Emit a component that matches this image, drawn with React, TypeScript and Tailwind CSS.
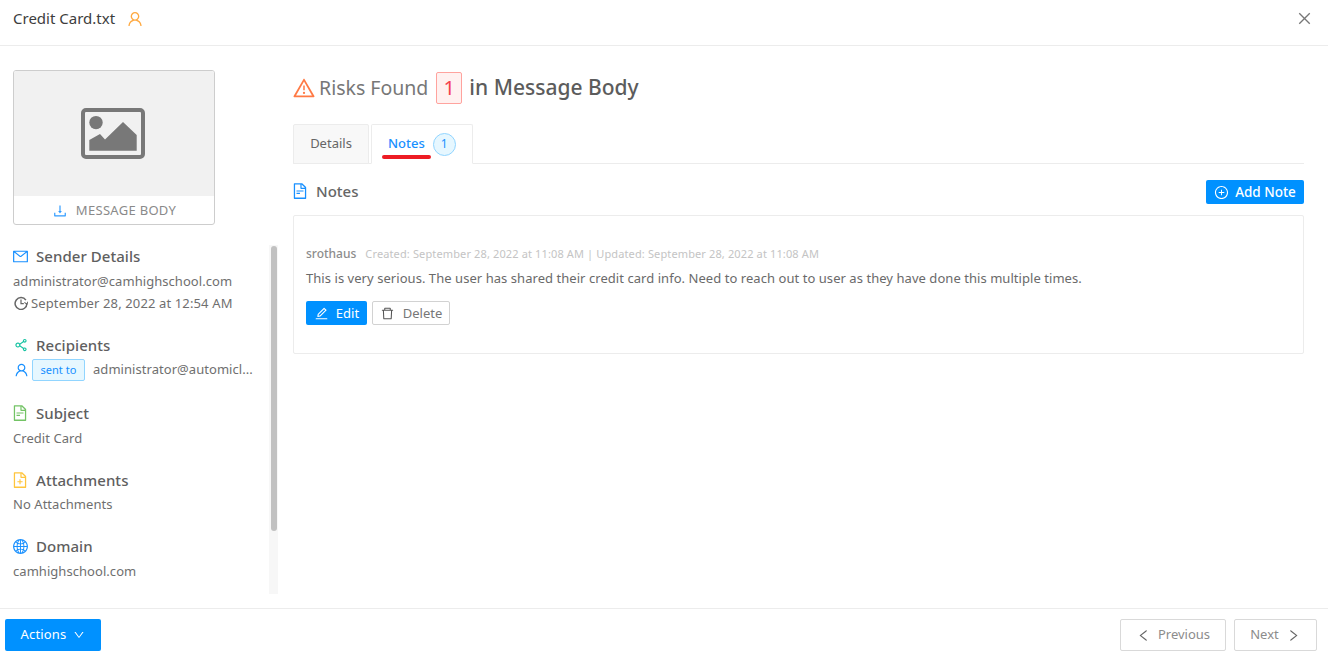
import React from "react";
import {
  AiOutlineUser, AiOutlineClose, AiOutlineDownload, AiOutlineMail, AiOutlineShareAlt,
  AiOutlineFileText, AiOutlineFileAdd, AiOutlineGlobal, AiOutlineWarning, AiOutlinePlusCircle, AiOutlineEdit,
  AiOutlineDelete, AiOutlineDown, AiOutlineLeft, AiOutlineRight,
} from "react-icons/ai";

function Section({ icon, title, children, className }: { icon: React.ReactNode; title: string; children: React.ReactNode; className: string }) {
  return (
    <div className={className}>
      <div className="flex items-center h-[20px]">
        <span className="w-[23px] flex items-center">{icon}</span>
        <span className="text-[15px] font-medium text-[#5f5f5f]">{title}</span>
      </div>
      {children}
    </div>
  );
}

export default function App() {
  return (
    <div className="w-[1328px] h-[655px] bg-white flex flex-col overflow-hidden text-[#666] font-['Noto_Sans','Open_Sans',sans-serif]">
      <header className="h-[46px] shrink-0 border-b border-[#ececec] flex items-center justify-between pl-[13px] pr-[15px] pb-[8px]">
        <div className="flex items-center gap-[11px]">
          <span className="text-[15px] text-[#3d3d3d]">Credit Card.txt</span>
          <AiOutlineUser className="text-[18px] text-[#ffa940]" />
        </div>
        <AiOutlineClose className="text-[17px] text-[#777]" />
      </header>

      <main className="flex-1 min-h-0 flex">
        <aside className="w-[293px] shrink-0 pl-[13px] pr-[15px] pt-[24px] flex flex-col">
          <div className="w-[202px] h-[155px] shrink-0 border border-[#cdcdcd] rounded-[3px] overflow-hidden flex flex-col">
            <div className="flex-1 bg-[#f1f1f1] flex items-center justify-center">
              <svg width="64" height="51" viewBox="0 0 64 51" className="text-[#787878] -ml-[2px]">
                <rect x="2" y="2" width="60" height="47" rx="3" fill="none" stroke="currentColor" strokeWidth="4" />
                <circle cx="15" cy="14.6" r="6.7" fill="currentColor" />
                <path d="M8.3 42.7V32L19 26L24 31.5L42 14L55.7 27V42.7Z" fill="currentColor" />
              </svg>
            </div>
            <div className="h-[28px] pt-[1px] flex items-center justify-center gap-[8px] text-[13px] tracking-[0.3px] text-[#8a8a8a]">
              <AiOutlineDownload className="text-[16px] text-[#2f9bff]" />
              <span>MESSAGE BODY</span>
            </div>
          </div>

          <div className="mt-[20px] flex-1 min-h-0 flex mb-[14px]">
            <div className="flex-1 min-w-0 overflow-hidden text-[13px] tracking-[0.05px] text-[#6f6f6f]">
              <Section className="pt-[1px]" icon={<AiOutlineMail className="text-[17px] text-[#1890ff] -ml-[1px]" />} title="Sender Details">
                <div className="mt-[4px] h-[22px] leading-[22px]">administrator@camhighschool.com</div>
                <div className="h-[22px] leading-[22px] flex items-center gap-[3px]">
                  <svg width="14" height="14" viewBox="0 0 14 14" fill="none" stroke="#666" strokeWidth="1.5" className="ml-[1px]">
                    <path d="M11.9 4.2A5.9 5.9 0 1 0 12.9 7.4" />
                    <path d="M10.4 6.4L12.9 8.2L14 5.8" strokeWidth="1.1" />
                    <path d="M7 3.6V7.6H9.8" strokeWidth="1.2" />
                  </svg>
                  <span className="tracking-[0.13px]">September 28, 2022 at 12:54 AM</span>
                </div>
              </Section>
              <Section className="mt-[21px]" icon={<AiOutlineShareAlt className="text-[16px] text-[#13c2a0]" />} title="Recipients">
                <div className="mt-[4px] flex items-center">
                  <AiOutlineUser className="text-[16px] text-[#1890ff] w-[19px] -ml-[1px]" />
                  <span className="ml-[1px] h-[22px] w-[53px] text-center border border-[#91d5ff] bg-[#e6f7ff] rounded-[2px] text-[11px] leading-[20px] text-[#1890ff]">sent to</span>
                  <span className="ml-[8px] whitespace-nowrap">administrator@automicl...</span>
                </div>
              </Section>
              <Section className="mt-[22px]" icon={<AiOutlineFileText className="text-[18px] text-[#73c365] -ml-[2px]" />} title="Subject">
                <div className="mt-[4px] h-[22px] leading-[22px]">Credit Card</div>
              </Section>
              <Section className="mt-[21px]" icon={<AiOutlineFileAdd className="text-[18px] text-[#ffc53d] -ml-[2px]" />} title="Attachments">
                <div className="mt-[3px] h-[22px] leading-[22px]">No Attachments</div>
              </Section>
              <Section className="mt-[21px]" icon={<AiOutlineGlobal className="text-[17px] text-[#1890ff] -ml-[1px]" />} title="Domain">
                <div className="mt-[4px] h-[22px] leading-[22px]">camhighschool.com</div>
              </Section>
            </div>
            <div className="w-[9px] shrink-0 bg-[#f7f7f7] flex justify-center">
              <div className="w-[6px] h-[285px] mt-[1px] rounded-full bg-[#c1c1c1]" />
            </div>
          </div>
        </aside>

        <section className="flex-1 min-w-0 pr-[24px] pt-[24px]">
          <div className="h-[36px] flex items-center">
            <AiOutlineWarning className="text-[24px] text-[#ff7a45] -ml-[1px]" />
            <span className="ml-[3px] text-[19.5px] text-[#777]">Risks Found</span>
            <span className="ml-[8px] w-[26px] h-[32px] flex items-center justify-center border border-[#ffa39e] bg-[#fff1f0] rounded-[2px] text-[20px] text-[#f5414d]">1</span>
            <span className="ml-[7px] text-[21px] font-medium text-[#5c5c5c]">in Message Body</span>
          </div>

          <div className="mt-[18px] h-[40px] flex items-end gap-[2px] border-b border-[#ececec]">
            <div className="w-[76px] h-[40px] -mb-[1px] border border-[#ececec] bg-[#f8f8f8] rounded-t-[2px] flex items-center justify-center text-[13px] text-[#666]">Details</div>
            <div className="relative w-[102px] h-[40px] -mb-[1px] border border-[#ececec] border-b-white bg-white rounded-t-[2px] flex items-center pl-[16px] gap-[8px]">
              <span className="text-[13px] font-medium text-[#1890ff]">Notes</span>
              <span className="w-[23px] h-[23px] rounded-full border border-[#91d5ff] bg-[#e6f7ff] flex items-center justify-center text-[12px] text-[#1890ff]">1</span>
              <span className="absolute left-[10px] top-[30px] w-[49px] h-[4px] rounded-full bg-[#ed1c24]" />
            </div>
          </div>

          <div className="mt-[16px] h-[24px] flex items-center justify-between">
            <div className="flex items-center -mt-[2px]">
              <AiOutlineFileText className="text-[18px] text-[#1890ff] -ml-[2px]" />
              <span className="ml-[7px] text-[15px] font-medium text-[#666]">Notes</span>
            </div>
            <button className="w-[98px] h-[24px] pt-[1px] bg-[#0091ff] rounded-[2px] text-white text-[13.5px] font-medium flex items-center justify-center gap-[6px]">
              <AiOutlinePlusCircle className="text-[15px]" />
              <span>Add Note</span>
            </button>
          </div>

          <div className="mt-[11px] h-[139px] border border-[#ececec] rounded-[2px] px-[12px] pt-[29px]">
            <div className="flex items-center h-[18px] text-[11px] gap-[9px]">
              <span className="text-[12px] font-medium text-[#8c8c8c]">srothaus</span>
              <span className="tracking-[0.13px] text-[#c4c4c4]">Created: September 28, 2022 at 11:08 AM | Updated: September 28, 2022 at 11:08 AM</span>
            </div>
            <div className="mt-[5px] h-[20px] leading-[20px] text-[13px] tracking-[0.05px] text-[#6a6a6a]">This is very serious. The user has shared their credit card info. Need to reach out to user as they have done this multiple times.</div>
            <div className="mt-[13px] flex gap-[5px]">
              <button className="w-[61px] h-[24px] pt-[1px] bg-[#0091ff] rounded-[2px] text-white text-[13px] flex items-center justify-center gap-[7px]">
                <AiOutlineEdit className="text-[15px]" />
                <span>Edit</span>
              </button>
              <button className="w-[78px] h-[24px] pt-[1px] border border-[#d2d2d2] rounded-[2px] text-[#777] text-[13px] flex items-center justify-center gap-[8px]">
                <AiOutlineDelete className="text-[15px] text-[#555]" />
                <span>Delete</span>
              </button>
            </div>
          </div>
        </section>
      </main>

      <footer className="h-[47px] shrink-0 border-t border-[#ececec] flex items-center justify-between pl-[5px] pr-[11px] pt-[6px]">
        <button className="w-[96px] h-[32px] bg-[#0091ff] rounded-[2px] text-white text-[13px] tracking-[0.15px] flex items-center justify-center gap-[7px]">
          <span>Actions</span>
          <AiOutlineDown className="text-[12px]" />
        </button>
        <div className="flex gap-[8px]">
          <button className="w-[106px] h-[32px] border border-[#d9d9d9] rounded-[2px] text-[13px] text-[#8c8c8c] flex items-center justify-center gap-[7px]">
            <AiOutlineLeft className="text-[15px] text-[#666]" />
            <span>Previous</span>
          </button>
          <button className="w-[83px] h-[32px] border border-[#d9d9d9] rounded-[2px] text-[13px] text-[#8c8c8c] flex items-center justify-center gap-[7px]">
            <span>Next</span>
            <AiOutlineRight className="text-[15px] text-[#666]" />
          </button>
        </div>
      </footer>
    </div>
  );
}
